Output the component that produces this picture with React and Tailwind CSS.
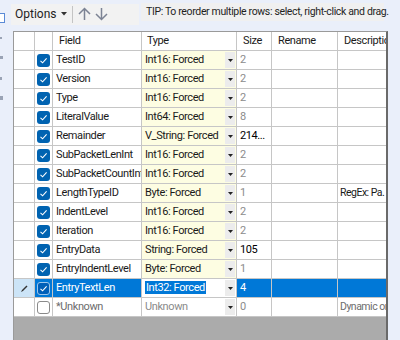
import React from "react";

const rows = [
  { field: "TestID", type: "Int16: Forced", size: "2" },
  { field: "Version", type: "Int16: Forced", size: "2" },
  { field: "Type", type: "Int16: Forced", size: "2" },
  { field: "LiteralValue", type: "Int64: Forced", size: "8" },
  { field: "Remainder", type: "V_String: Forced", size: "214...", dark: true },
  { field: "SubPacketLenInt", type: "Int16: Forced", size: "2" },
  { field: "SubPacketCountInt", type: "Int16: Forced", size: "2" },
  { field: "LengthTypeID", type: "Byte: Forced", size: "1", desc: "RegEx: Pa." },
  { field: "IndentLevel", type: "Int16: Forced", size: "2" },
  { field: "Iteration", type: "Int16: Forced", size: "2" },
  { field: "EntryData", type: "String: Forced", size: "105", dark: true },
  { field: "EntryIndentLevel", type: "Byte: Forced", size: "1" },
  { field: "EntryTextLen", type: "Int32: Forced", size: "4", selected: true },
  { field: "*Unknown", type: "Unknown", size: "0", desc: "Dynamic or", unknown: true },
];

function Check({ on, selected }) {
  if (!on) {
    return <div className="w-[13px] h-[13px] rounded-[3px] border border-[#8a8a8a] bg-white" />;
  }
  return (
    <div
      className={`w-[13px] h-[13px] rounded-[3px] flex items-center justify-center ${
        selected ? "bg-[#005fb8] border border-[#9cc6ec]" : "bg-[#0063b1]"
      }`}
    >
      <svg width="9" height="9" viewBox="0 0 9 9" fill="none">
        <path d="M1.5 4.8 L3.6 6.8 L7.6 2.4" stroke="white" strokeWidth="1.1" />
      </svg>
    </div>
  );
}

function Arrow() {
  return (
    <div className="w-[10px] self-stretch my-[1px] bg-[#ececec] flex items-center justify-center">
      <svg width="5" height="3" viewBox="0 0 5 3">
        <path d="M0 0 L5 0 L2.5 3 Z" fill="#222" />
      </svg>
    </div>
  );
}

function Row({ r }) {
  const cell = "border-r border-b border-[#c6c6c6] flex items-center whitespace-nowrap overflow-hidden";
  const sel = r.selected;
  const blue = sel ? "bg-[#0078d7] text-white" : "bg-white";
  return (
    <>
      <div className={`${cell} justify-center ${sel ? "bg-[#cce4f7]" : "bg-white"}`}>
        {sel && (
          <svg width="9" height="9" viewBox="0 0 9 9">
            <path d="M1 8 L2 6 L6.5 1.5 L7.5 2.5 L3 7 Z" fill="#333" />
          </svg>
        )}
      </div>
      <div className={`${cell} justify-center ${sel ? "bg-[#0078d7]" : "bg-white"}`}>
        <Check on={!r.unknown} selected={sel} />
      </div>
      <div className={`${cell} pl-[3px] ${blue} ${r.unknown ? "text-[#6d6d6d]" : ""}`}>
        {r.field}
      </div>
      <div className={`${cell} pl-[3px] pr-[1px] ${sel || r.unknown ? "bg-white" : "bg-[#fdfde2]"}`}>
        <div className="flex-1 min-w-0">
          {sel ? (
            <span className="bg-[#0078d7] text-white px-[1px]">{r.type}</span>
          ) : (
            <span className={r.unknown ? "text-[#8a8a8a]" : ""}>{r.type}</span>
          )}
        </div>
        <Arrow />
      </div>
      <div
        className={`${cell} pl-[3px] ${blue} ${
          sel ? "" : r.dark ? "text-black" : "text-[#8c8c8c]"
        }`}
      >
        {r.size}
      </div>
      <div className={`${cell} ${blue}`} />
      <div
        className={`${cell} pl-[2px] border-r-0 text-[10.5px] tracking-[-0.5px] ${blue} ${
          r.unknown ? "text-[#6d6d6d]" : ""
        }`}
      >
        {r.desc}
      </div>
    </>
  );
}

export default function App() {
  return (
    <div
      className="w-[400px] h-[340px] bg-[#eaeffa] overflow-hidden relative text-[11px] tracking-[-0.4px] text-[#1a1a1a]"
      style={{ fontFamily: "Roboto, 'Liberation Sans', sans-serif" }}
    >
      {/* left edge of neighbouring pane */}
      <div className="absolute left-0 top-[13px] w-[5px] h-[10px] border border-l-0 border-[#5a8ad6] bg-white" />
      <div className="absolute left-0 top-[37px] w-[2px] h-[2px] bg-[#9aa3b5]" />
      <div className="absolute left-0 top-[56px] w-[3px] h-[3px] bg-[#9aa3b5]" />
      <div className="absolute left-0 top-[77px] w-[2px] h-[3px] bg-[#9aa3b5]" />
      <div className="absolute left-0 top-[96px] w-[3px] h-[4px] bg-[#9aa3b5]" />

      <div className="flex items-center h-[22px] mt-[3px]">
        <div className="ml-[11px] w-[128px] h-[21px] bg-[#f2f2f2] flex items-center pl-[4px]">
          <span className="text-[12px] tracking-normal text-[#222]">Options</span>
          <svg className="ml-[4px]" width="6" height="4" viewBox="0 0 6 4">
            <path d="M0 0 L6 0 L3 3.5 Z" fill="#333" />
          </svg>
          <div className="ml-[5px] w-px h-[17px] bg-[#c4c4c4]" />
          <svg className="ml-[5px]" width="13" height="14" viewBox="0 0 13 14" fill="none" stroke="#7c8394" strokeWidth="1.5">
            <path d="M6.5 13 V1.5 M1 7 L6.5 1.5 L12 7" />
          </svg>
          <svg className="ml-[4px]" width="13" height="14" viewBox="0 0 13 14" fill="none" stroke="#7c8394" strokeWidth="1.5">
            <path d="M6.5 1 V12.5 M1 7 L6.5 12.5 L12 7" />
          </svg>
        </div>
        <div className="ml-[2px] w-[243px] h-[18px] -mt-[4px] bg-[#f0f0f0] flex items-center pl-[5px] text-[10.5px] tracking-[-0.35px] whitespace-nowrap text-[#1f1f1f]">
          TIP: To reorder multiple rows: select, right-click and drag.
        </div>
      </div>

      <div className="ml-[13px] mt-[6px] w-[375px] h-[320px] border-l border-t border-[#9a9a9a] border-r-2 border-r-[#6a6a6a] bg-[#ababab]">
        <div className="grid grid-cols-[21px_18px_89px_95px_35px_66px_1fr] auto-rows-[19px] bg-white">
          {["", "", "Field", "Type", "Size", "Rename", "Description"].map((h, i) => (
            <div
              key={i}
              className={`border-b border-[#c6c6c6] flex items-center whitespace-nowrap overflow-hidden ${
                i === 6 ? "" : "border-r"
              } ${i === 2 ? "pl-[6px]" : "pl-[5px]"} ${i >= 4 ? "pl-[6px]" : ""}`}
            >
              {h}
            </div>
          ))}
          {rows.map((r) => (
            <Row key={r.field} r={r} />
          ))}
        </div>
      </div>
    </div>
  );
}
